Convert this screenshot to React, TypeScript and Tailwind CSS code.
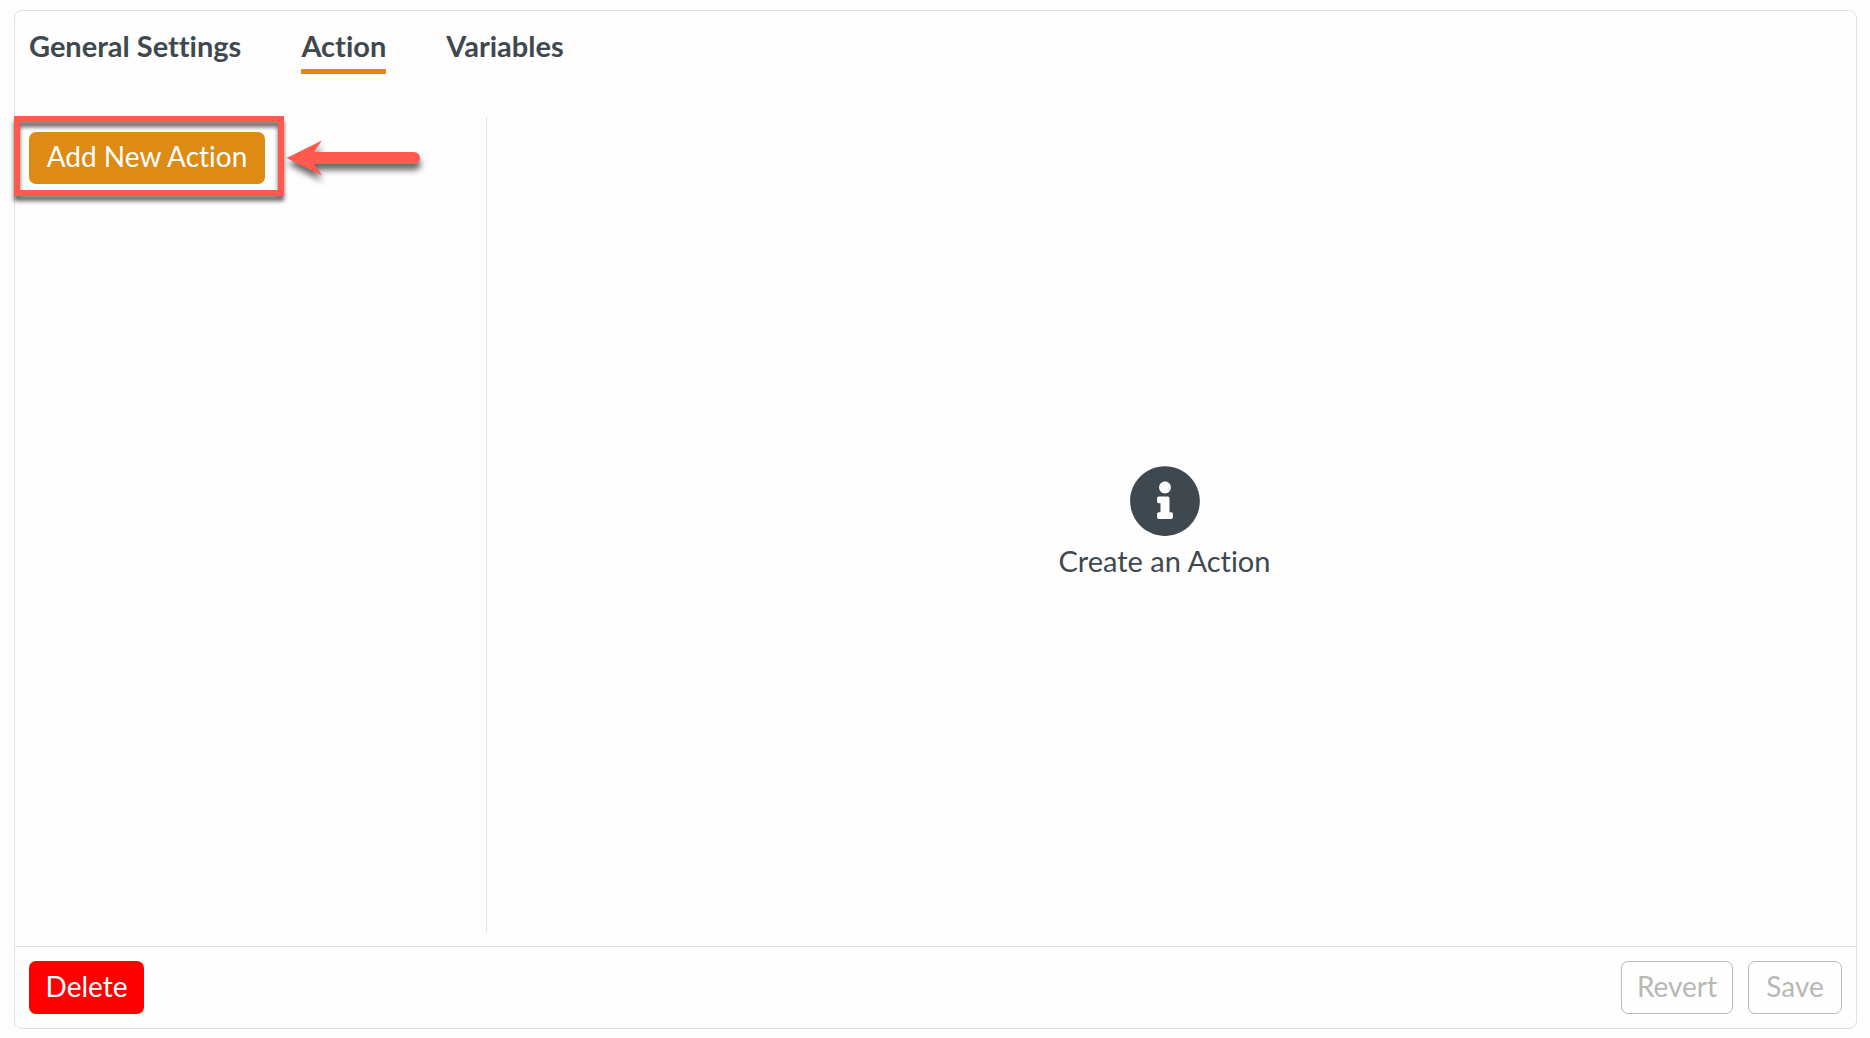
import React, { useState } from 'react';
import { FaInfoCircle } from 'react-icons/fa';

const TABS = ['General Settings', 'Action', 'Variables'];

interface TabBarProps {
  activeTab: string;
  onTabChange: (tab: string) => void;
}

const TabBar: React.FC<TabBarProps> = ({ activeTab, onTabChange }) => {
  return (
    <nav className="flex gap-15 px-3.5 pt-[17px] text-[29px]">
      {TABS.map((tab) => (
        <button
          key={tab}
          type="button"
          onClick={() => onTabChange(tab)}
          className={
            tab === activeTab
              ? 'border-b-5 border-[#dd8b14] pb-[5px] font-bold leading-9'
              : 'border-b-5 border-transparent pb-[5px] font-bold leading-9'
          }
        >
          {tab}
        </button>
      ))}
    </nav>
  );
};

// Red frame and arrow that point the reader to the button
const Callout: React.FC = () => {
  return (
    <>
      <div className="pointer-events-none absolute -top-4 -right-[19px] -bottom-3 -left-[15px] border-6 border-[#ff5a4d] drop-shadow-[0_5px_2px_rgba(0,0,0,0.6)]" />
      <svg
        className="pointer-events-none absolute top-0 left-full ml-5 h-14 w-[144px] overflow-visible drop-shadow-[1px_6px_3px_rgba(0,0,0,0.6)]"
        viewBox="0 0 144 56"
        aria-hidden="true"
      >
        <path
          d="M1.5 26 L37 8.500 L29 20 H129 A6 6 0 0 1 129 32 H29 L37 43.500 Z"
          fill="#ff5a4d"
        />
      </svg>
    </>
  );
};

const App: React.FC = () => {
  const [activeTab, setActiveTab] = useState('Action');

  return (
    <div className="flex min-h-screen bg-[#fdfdfd] pt-2.5 pr-[13px] pb-[9px] pl-3.5 font-[Lato,sans-serif] text-[28px] text-[#40484f] [font-variant-ligatures:none]">
      <main className="flex flex-1 flex-col rounded-lg border border-[#e1e1e1] bg-[#fefefe]">
        <TabBar activeTab={activeTab} onTabChange={setActiveTab} />

        <div className="mt-[43px] mb-3.5 flex flex-1">
          <aside className="w-[472px] border-r border-[#e1e1e1] pt-[15px] pl-3.5">
            <div className="relative w-fit">
              <button
                type="button"
                className="block h-[52px] min-w-[236px] rounded-[7px] bg-[#dd8b14] px-3 pb-1 whitespace-nowrap text-white"
              >
                Add New Action
              </button>
              <Callout />
            </div>
          </aside>

          <section className="flex flex-1 flex-col items-center justify-center gap-1.5 pr-3.5 pb-1.5">
            <FaInfoCircle className="size-[72px]" />
            <p className="text-[29px] leading-9">Create an Action</p>
          </section>
        </div>

        <footer className="flex items-center gap-[15px] border-t border-[#e1e1e1] p-3.5">
          <button
            type="button"
            className="mr-auto h-[53px] min-w-[115px] rounded-[7px] bg-[#ff0000] px-3 pb-1 text-white"
          >
            Delete
          </button>
          <button
            type="button"
            disabled
            className="h-[53px] min-w-28 rounded-[7px] border border-[#b8b8b4] px-3 pb-1 text-[#b8b8b4]"
          >
            Revert
          </button>
          <button
            type="button"
            disabled
            className="h-[53px] min-w-[94px] rounded-[7px] border border-[#b8b8b4] px-3 pb-1 text-[#b8b8b4]"
          >
            Save
          </button>
        </footer>
      </main>
    </div>
  );
};

export default App;
